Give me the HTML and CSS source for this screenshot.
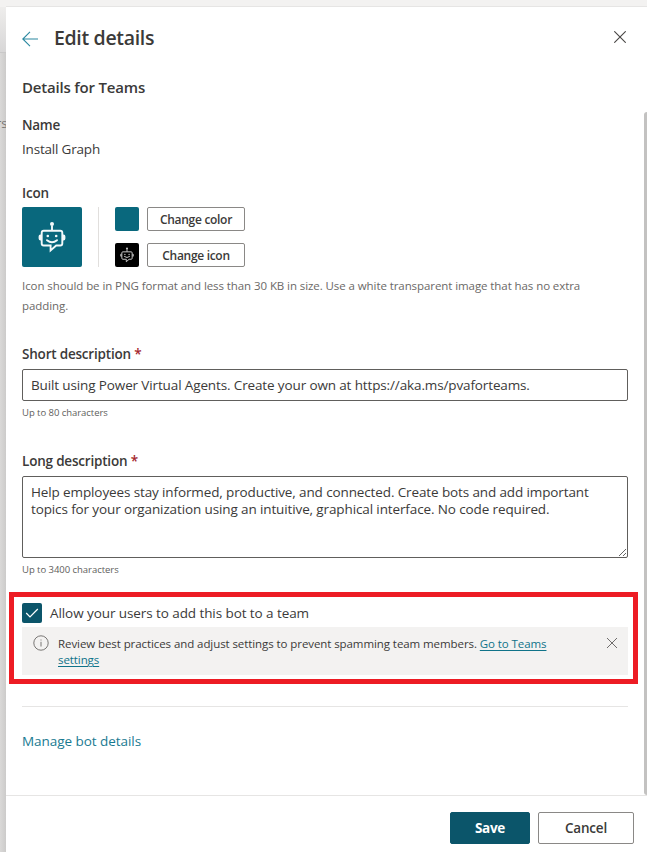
FILE: index.html
```html
<!DOCTYPE html>
<html lang="en">
<head>
<meta charset="utf-8">
<title>Edit details</title>
<link rel="stylesheet" href="styles.css">
</head>
<body>
<svg class="sprite" aria-hidden="true">
  <symbol id="bot" viewBox="0 0 28 32">
    <g fill="none" stroke="currentColor" stroke-width="1.900">
      <path d="M14 4.500V9.500"/>
      <path d="M5.700 9.700H22.300Q24.300 9.700 24.300 11.700V22.500Q24.300 24.500 22.300 24.500H18.200L12.600 29.500V24.500H5.700Q3.700 24.500 3.700 22.500V11.700Q3.700 9.700 5.700 9.700Z"/>
      <path d="M9 19.200Q14 23.200 19 19.200" stroke-linecap="round"/>
    </g>
    <g fill="currentColor">
      <circle cx="14" cy="3" r="2"/>
      <circle cx="9.800" cy="15" r="1.300"/>
      <circle cx="18.200" cy="15" r="1.300"/>
      <path d="M3 13.500H2.500Q.6 13.500.6 15.500V17.500Q.6 19.500 2.500 19.500H3ZM25 13.500H25.500Q27.400 13.500 27.400 15.500V17.500Q27.400 19.500 25.500 19.500H25Z"/>
    </g>
  </symbol>
</svg>
<div class="page">
  <div class="backdrop"><div class="backdrop-top"></div><span class="backdrop-text">rs</span></div>
  <main class="panel">
    <header class="header">
      <svg class="back" viewBox="0 0 16 16"><path d="M16 8H1M8 .8.8 8 8 15.200"/></svg>
      <h1 class="title">Edit details</h1>
      <svg class="close" viewBox="0 0 12 12"><path d="M.3.3 11.700 11.700M11.700.3.3 11.700"/></svg>
    </header>
    <div class="scroll">
      <div class="content">
        <h2 class="section-title">Details for Teams</h2>
        <div class="label name-label">Name</div>
        <div class="name">Install Graph</div>
        <div class="label icon-label">Icon</div>
        <div class="icon-row">
          <div class="tile"><svg class="tile-bot"><use href="#bot"/></svg></div>
          <div class="divider"></div>
          <div class="options">
            <div class="option"><span class="swatch"></span><button class="small-button">Change color</button></div>
            <div class="option"><span class="swatch dark"><svg class="swatch-bot"><use href="#bot"/></svg></span><button class="small-button">Change icon</button></div>
          </div>
        </div>
        <p class="icon-hint">Icon should be in PNG format and less than 30 KB in size. Use a white transparent image that has no extra padding.</p>
        <label class="label short-label" for="short">Short description <span class="required">*</span></label>
        <input class="field" id="short" value="Built using Power Virtual Agents. Create your own at https://aka.ms/pvaforteams.">
        <div class="limit">Up to 80 characters</div>
        <label class="label long-label" for="long">Long description <span class="required">*</span></label>
        <textarea class="field area" id="long">Help employees stay informed, productive, and connected. Create bots and add important topics for your organization using an intuitive, graphical interface. No code required.</textarea>
        <div class="limit">Up to 3400 characters</div>
        <section class="highlight">
          <div class="check-row">
            <span class="checkbox"><svg class="check" viewBox="0 0 14 10"><path d="M1.200 5 5 8.800 12.800 1"/></svg></span>
            <span class="check-text">Allow your users to add this bot to a team</span>
          </div>
          <div class="banner">
            <svg class="info" viewBox="0 0 16 16"><circle cx="8" cy="8" r="7.200"/><path d="M8 6.800V11.500M8 4.500V5.500"/></svg>
            <p class="banner-text">Review best practices and adjust settings to prevent spamming team members. <a class="banner-link">Go to Teams settings</a></p>
            <svg class="dismiss" viewBox="0 0 12 12"><path d="M1 1 11 11M11 1 1 11"/></svg>
          </div>
        </section>
        <div class="rule"></div>
        <a class="manage">Manage bot details</a>
      </div>
      <div class="track"><div class="thumb"></div></div>
    </div>
    <footer class="footer">
      <button class="button primary">Save</button>
      <button class="button">Cancel</button>
    </footer>
  </main>
</div>
</body>
</html>
```
FILE: styles.css
```css
* { box-sizing: border-box; }
body {
  margin: 0;
  overflow: hidden;
  background: #f3f2f1;
  color: #3b3a39;
  font: 13.5px/20px "Open Sans", "Noto Sans", sans-serif;
}
button, input, textarea { font: inherit; color: inherit; }
h1, h2, p { margin: 0; }
svg { display: block; fill: none; flex: none; }
.sprite { display: none; }
.page { display: flex; height: 852px; padding-top: 7px; }
.backdrop {
  width: 6px;
  flex: none;
  overflow: hidden;
  background: linear-gradient(90deg, #dad9d8, #cccbca);
}
.backdrop-top { height: 46px; background: linear-gradient(#eeedec, #d8d7d7); border-bottom: 1px solid #c9c8c8; }
.backdrop-text {
  display: block;
  margin: 60px 0 0 -4px;
  font-size: 13px;
  color: #797775;
}
.panel { flex: 1; min-width: 0; display: flex; flex-direction: column; background: #fff; box-shadow: 0 -1px #e6e5e4; }
.header { display: flex; align-items: center; height: 61px; padding: 0 21px 0 16px; }
.back { width: 16px; height: 16px; margin-top: 3px; stroke: #2b88a0; stroke-width: 1.1; }
.title { flex: 1; margin-left: 16px; font-size: 19.5px; line-height: 28px; font-weight: 600; letter-spacing: -.33px; }
.close { width: 12px; height: 12px; margin-bottom: 1px; stroke: #484644; stroke-width: 1.1; }
.scroll { display: flex; height: 727px; }
.content { flex: 1; min-width: 0; padding: 8px 16px 0; }
.section-title { font-size: 15px; line-height: 22px; font-weight: 600; letter-spacing: -.19px; }
.label { display: block; font-weight: 600; letter-spacing: -.2px; }
.name-label { margin-top: 17px; letter-spacing: -.27px; }
.name { margin-top: 4px; letter-spacing: -.19px; }
.icon-label { margin-top: 24px; }
.icon-row { display: flex; margin-top: 4px; height: 60px; }
.tile { width: 60px; background: #09687d; border-radius: 2px; display: flex; align-items: center; justify-content: center; }
.tile-bot { width: 28px; height: 32px; color: #f3f9fa; }
.divider { width: 1px; margin: 0 16px; background: #e1dfdd; }
.options { display: flex; flex-direction: column; justify-content: space-between; }
.option { display: flex; gap: 8px; }
.swatch { display: flex; align-items: center; justify-content: center; width: 24px; height: 24px; border-radius: 2px; background: #09687d; }
.dark { background: #000; }
.swatch-bot { width: 14px; height: 16px; color: #d0d0d0; }
.small-button {
  width: 98px;
  height: 24px;
  padding: 2px 0 0;
  border: 1px solid #8a8886;
  border-radius: 2px;
  background: #fff;
  font-size: 12px;
  line-height: 20px;
  font-weight: 600;
  letter-spacing: -.3px;
}
.icon-hint { margin-top: 9px; font-size: 11.5px; letter-spacing: -.08px; color: #6b6967; }
.short-label { margin-top: 28px; }
.required { color: #a4262c; }
.field {
  display: block;
  width: 100%;
  height: 32px;
  margin-top: 5px;
  padding: 0 8px;
  border: 1px solid #605e5c;
  border-radius: 2px;
  background: #fff;
  outline: 0;
  letter-spacing: -.13px;
}
.limit { margin-top: 4px; font-size: 9.5px; line-height: 16px; letter-spacing: -.04px; color: #605e5c; }
.long-label { margin-top: 30px; }
.area { height: 82px; padding: 7px 8px; line-height: 17px; letter-spacing: -.12px; resize: vertical; overflow: auto; }
.highlight { margin: 14px -10px 0 -13px; height: 92px; padding: 6px 5px 0 8px; border: 5px solid #ed1c24; }
.check-row { display: flex; align-items: center; height: 20px; }
.checkbox { display: flex; align-items: center; justify-content: center; width: 20px; height: 20px; border-radius: 2px; background: #0b556a; }
.check { width: 14px; height: 10px; stroke: #fff; stroke-width: 1.2; }
.check-text { margin-left: 8px; letter-spacing: -.08px; }
.banner { display: flex; align-items: flex-start; height: 48px; margin-top: 4px; padding: 8px 10px 0 11px; background: #f3f2f1; }
.info { width: 16px; height: 16px; stroke: #797775; stroke-width: 1; }
.banner-text { flex: none; width: 510px; margin: 1px 0 0 9px; font-size: 11.5px; line-height: 16px; letter-spacing: -.08px; }
.banner-link { color: #0f7389; text-decoration: underline; text-underline-offset: 2px; }
.dismiss { width: 12px; height: 12px; margin: 2px 0 0 auto; stroke: #605e5c; stroke-width: .9; }
.rule { height: 1px; margin-top: 22px; background: #e6e5e4; }
.manage { display: block; margin-top: 24px; letter-spacing: -.05px; color: #197a91; }
.track { flex: none; width: 3px; padding-top: 44px; }
.thumb { height: 683px; background: #c3c2c1; border-radius: 3px 0 0 3px; }
.footer { flex: 1; display: flex; justify-content: flex-end; gap: 8px; padding: 16px 13px 0 0; border-top: 1px solid #e6e5e4; }
.button {
  width: 96px;
  height: 32px;
  padding: 0;
  border: 1px solid #8a8886;
  border-radius: 2px;
  background: #fff;
  font-weight: 600;
  letter-spacing: -.2px;
}
.primary { width: 80px; border-color: #0b556a; background: #0b556a; color: #fff; font-weight: 700; letter-spacing: -.3px; }
```
